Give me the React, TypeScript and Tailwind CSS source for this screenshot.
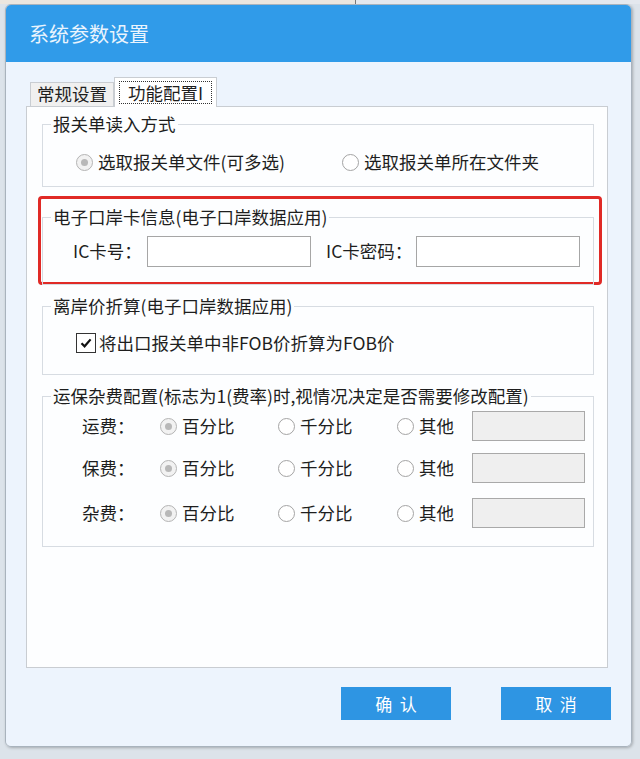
import React from "react";

const font = { fontFamily: '"Noto Sans CJK SC", "Noto Sans", sans-serif' };

const Radio = ({ checked, label }: { checked?: boolean; label: string }) => {
  return (
    <div className="flex items-center">
      <div
        className={
          checked
            ? "flex h-[17px] w-[17px] items-center justify-center rounded-full border border-[#b4b4b4] bg-[#f2f2f2]"
            : "h-[17px] w-[17px] rounded-full border border-[#a4a4a4] bg-white"
        }
      >
        {checked && <div className="h-[7px] w-[7px] rounded-full bg-[#b8b8b8]" />}
      </div>
      <span className="ml-[5px]">{label}</span>
    </div>
  );
};

const Group = ({
  title,
  className,
  children,
}: {
  title: string;
  className: string;
  children: React.ReactNode;
}) => {
  return (
    <fieldset className={"border border-[#d7dce2] " + className}>
      <legend className="ml-[8px] px-[2px] leading-[24px]">{title}</legend>
      {children}
    </fieldset>
  );
};

const FeeRow = ({ label, className }: { label: string; className: string }) => {
  return (
    <div className={"flex h-[30px] items-center " + className}>
      <span className="w-[78px]">{label}</span>
      <div className="w-[118px]">
        <Radio checked label="百分比" />
      </div>
      <div className="w-[119px]">
        <Radio label="千分比" />
      </div>
      <div className="w-[75px]">
        <Radio label="其他" />
      </div>
      <div className="h-[30px] w-[113px] border border-[#a9a9a9] bg-[#efefef]" />
    </div>
  );
};

export default function App() {
  return (
    <div
      className="h-[759px] w-[640px] overflow-hidden bg-[#dce3ea] text-[17.5px] text-[#1e1e1e]"
      style={font}
    >
      <div className="flex h-[4px]">
        <div className="w-[355px] bg-[#ebe6df]" />
        <div className="w-[1px] bg-[#777]" />
        <div className="flex-1 bg-[#e4e8ee]" />
      </div>
      <div className="ml-[5px] flex h-[743px] w-[627px] flex-col overflow-hidden rounded-[6px] border border-[#a9b3bd] shadow-[1px_1px_3px_rgba(0,0,0,0.25)]">
        <div className="flex h-[57px] items-center bg-[#309be9] pl-[23px] text-[20px] text-[#eaf4fd]">
          系统参数设置
        </div>
        <div className="flex flex-1 flex-col bg-[#edf4fd] pl-[20px] pr-[23px] pt-[15px]">
          <div className="flex items-end pl-[4px]">
            <div className="flex h-[24px] items-center border border-b-0 border-[#c9cdd2] bg-[#f0f0f0] px-[6px]">
              常规设置
            </div>
            <div className="relative z-10 -mb-px flex h-[30px] items-center border border-b-0 border-[#c9cdd2] bg-white px-[4px]">
              <span className="border border-dotted border-[#333] px-[8px] leading-[21px]">
                功能配置I
              </span>
            </div>
          </div>
          <div className="flex h-[562px] flex-col border border-[#c9cdd2] bg-[#fdfeff] pl-[15px] pr-[13px] pt-[5px]">
            <Group title="报关单读入方式" className="pb-[12px] pt-[14px]">
              <div className="flex h-[24px] items-center pl-[33px]">
                <div className="w-[266px]">
                  <Radio checked label="选取报关单文件(可多选)" />
                </div>
                <Radio label="选取报关单所在文件夹" />
              </div>
            </Group>

            <div className="-ml-[4px] -mr-[8px] mt-[9px] rounded-[4px] border-[3px] border-[#e02a26] pl-[1px] pr-[5px] pt-[6px]">
              <Group
                title="电子口岸卡信息(电子口岸数据应用)"
                className="-mb-[3px] pb-[17px] pt-[7px]"
              >
                <div className="flex items-center pl-[30px]">
                  <span className="w-[74px]">IC卡号：</span>
                  <div className="h-[31px] w-[164px] border border-[#a6a6a6] bg-white" />
                  <span className="ml-[15px] w-[90px]">IC卡密码：</span>
                  <div className="h-[31px] w-[164px] border border-[#a6a6a6] bg-white" />
                </div>
              </Group>
            </div>

            <Group
              title="离岸价折算(电子口岸数据应用)"
              className="mt-[9px] pb-[19px] pt-[13px]"
            >
              <div className="flex h-[24px] items-center pl-[33px]">
                <div className="flex h-[20px] w-[20px] items-center justify-center border border-[#333] bg-white">
                  <svg width="14" height="14" viewBox="0 0 14 14">
                    <path
                      d="M2.5 7.2 L5.6 10.3 L11.6 3.4"
                      fill="none"
                      stroke="#111"
                      strokeWidth="2.2"
                    />
                  </svg>
                </div>
                <span className="ml-[3px]">将出口报关单中非FOB价折算为FOB价</span>
              </div>
            </Group>

            <Group
              title="运保杂费配置(标志为1(费率)时,视情况决定是否需要修改配置)"
              className="mt-[9px] pb-[18px] pt-[3px]"
            >
              <div className="pl-[39px]">
                <FeeRow label="运费：" className="" />
                <FeeRow label="保费：" className="mt-[12px]" />
                <FeeRow label="杂费：" className="mt-[15px]" />
              </div>
            </Group>
          </div>
          <div className="-mr-[3px] mt-[19px] flex justify-end gap-[50px]">
            <button className="flex h-[33px] w-[110px] items-center justify-center bg-[#2e95e3] text-[17px] text-white">
              确&nbsp;&nbsp;认
            </button>
            <button className="flex h-[33px] w-[110px] items-center justify-center bg-[#2e95e3] text-[17px] text-white">
              取&nbsp;&nbsp;消
            </button>
          </div>
        </div>
      </div>
    </div>
  );
}
